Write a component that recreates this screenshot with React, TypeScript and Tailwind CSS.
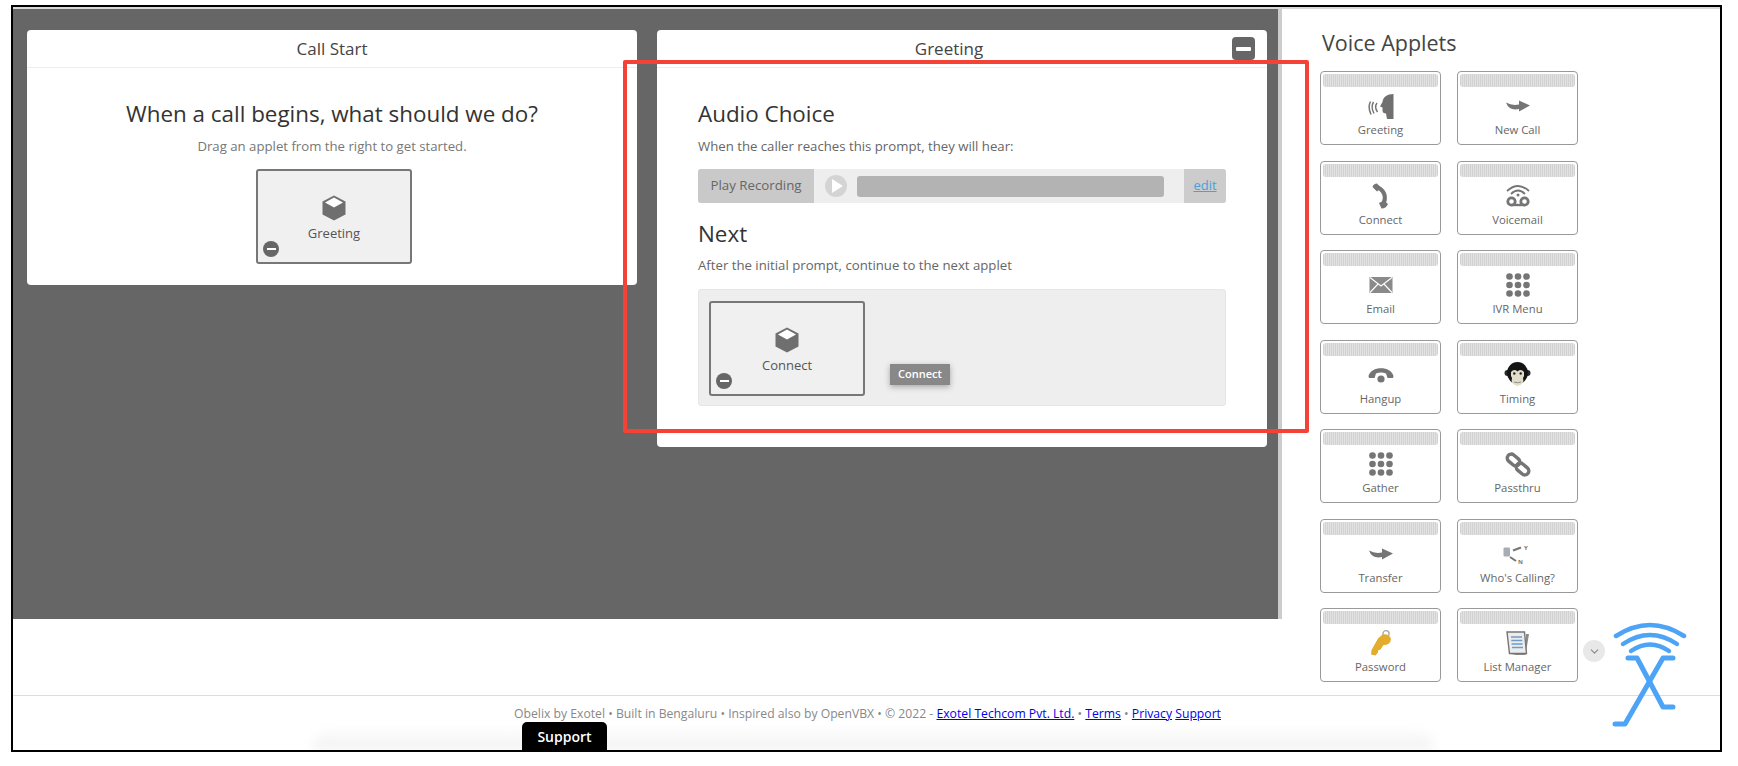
import React from 'react';
import { ChevronDown } from 'lucide-react';

const Keypad = () => (
  <svg width="24" height="25" viewBox="0 0 24 25" fill="#757575">
    {[3.5, 12, 20.5].map((y) =>
      [3.5, 12, 20.5].map((x) => <circle key={`${x}-${y}`} cx={x} cy={y} r="3.3" />)
    )}
  </svg>
);

const SwoopArrow = () => (
  <svg width="24" height="12" viewBox="0 0 24 12" fill="#757575">
    <path d="M0 2.5 Q6 6 13 4.5 L13 0.5 L24 5.5 L13 11.5 L13 9 Q3 11 0 2.5Z" />
  </svg>
);

const CubeIcon = () => (
  <svg width="26" height="26" viewBox="0 0 26 26">
    <path d="M13 0.5 L24.5 6.5 L24.5 19.5 L13 25.5 L1.5 19.5 L1.5 6.5Z" fill="#6f6f6f" />
    <path d="M13 2.5 L22 7.5 L13 12.5 L4 7.5Z" fill="#fff" />
  </svg>
);

const GreetingIcon = () => (
  <svg width="26" height="25" viewBox="0 0 26 25">
    <path d="M25.5 0 C19 0 15 3 14.5 8 L12 12.5 L14.5 13.5 L14.5 17 Q15 19.5 18 19.5 L19 25 L25.5 25Z" fill="#707070" />
    <g fill="none" stroke="#757575" strokeWidth="1.5">
      <path d="M9 9 Q6 13 9.5 18" />
      <path d="M5.5 8 Q2.5 13 6 19.5" />
      <path d="M2.5 7.5 Q-0.5 13 3 20.5" />
    </g>
  </svg>
);

const PhoneIcon = () => (
  <svg width="18" height="26" viewBox="0 0 18 26">
    <path d="M3 3.5 C12 6 16 14 10 23" fill="none" stroke="#757575" strokeWidth="4.2" />
    <path d="M0.5 4 Q1.5 0.5 5 0.5 L9 5 L5 8.5Z" fill="#757575" />
    <path d="M7 20 L12 17.5 L16 21 Q14 25.5 9.5 25.5Z" fill="#757575" />
  </svg>
);

const VoicemailIcon = () => (
  <svg width="26" height="23" viewBox="0 0 26 23" fill="none" stroke="#757575">
    <path d="M2 7 Q13 -3 24 7" strokeWidth="1.8" />
    <path d="M6 10 Q13 3 20 10" strokeWidth="1.8" />
    <circle cx="13" cy="11" r="1.5" fill="#757575" stroke="none" />
    <circle cx="6.5" cy="17.5" r="3.7" strokeWidth="2.8" />
    <circle cx="19.5" cy="17.5" r="3.7" strokeWidth="2.8" />
    <path d="M6.5 21 H19.5" strokeWidth="2.4" />
  </svg>
);

const MailIcon = () => (
  <svg width="24" height="18" viewBox="0 0 24 18">
    <rect x="0.5" y="1" width="23" height="16" fill="#8a8a8a" />
    <path d="M1 1.5 L12 10 L23 1.5 M1 16.5 L9 8 M23 16.5 L15 8" fill="none" stroke="#fff" strokeWidth="1.1" />
  </svg>
);

const HangupIcon = () => (
  <svg width="26" height="16" viewBox="0 0 26 16" fill="#757575">
    <path d="M0.5 9 C3 -1.5 23 -1.5 25.5 9 L25 11 L19.5 11 L18 6.5 C15 5 11 5 8 6.5 L6.5 11 L1 11Z" />
    <circle cx="13" cy="12" r="3.6" />
  </svg>
);

const MonkeyIcon = () => (
  <svg width="27" height="25" viewBox="0 0 27 25">
    <circle cx="3.5" cy="11" r="3" fill="#2a2a2a" />
    <circle cx="23.5" cy="11" r="3" fill="#2a2a2a" />
    <ellipse cx="13.5" cy="11" rx="10.5" ry="11" fill="#141414" />
    <path d="M7 10 Q10 6.5 13.5 9.5 Q17 6.5 20 10 Q20.5 14 19 16 Q21 22 13.5 24 Q6 22 8 16 Q6.5 14 7 10Z" fill="#e2dccb" />
    <circle cx="10.3" cy="11.5" r="1.2" fill="#222" />
    <circle cx="16.7" cy="11.5" r="1.2" fill="#222" />
    <path d="M10 20 Q13.5 21.5 17 20" fill="none" stroke="#777" strokeWidth="0.8" />
  </svg>
);

const LinkIcon = () => (
  <svg width="26" height="25" viewBox="0 0 26 25" fill="none" stroke="#757575" strokeWidth="3.4">
    <rect x="1.5" y="4" width="14" height="8" rx="4" transform="rotate(40 8.5 8)" />
    <rect x="10.5" y="13" width="14" height="8" rx="4" transform="rotate(40 17.5 17)" />
  </svg>
);

const WhosCallingIcon = () => (
  <svg width="29" height="24" viewBox="0 0 29 24">
    <rect x="0.5" y="5.5" width="6.5" height="9" rx="1" fill="#a7adb3" />
    <path d="M10 8.5 L18 5.5" stroke="#757575" strokeWidth="2" />
    <path d="M7 15 L13 19" stroke="#757575" strokeWidth="2" />
    <text x="21" y="8" fontSize="6" fontWeight="700" fill="#777">Y</text>
    <text x="15" y="22" fontSize="6" fontWeight="700" fill="#777">N</text>
  </svg>
);

const KeyIcon = () => (
  <svg width="22" height="26" viewBox="0 0 22 26">
    <circle cx="16" cy="3.8" r="3.1" fill="none" stroke="#a3a3a3" strokeWidth="1.3" />
    <path d="M8 8.5 L1.5 20 L1 24.5 L5.5 25.5 L8 22.5 L8 20.5 L10.5 19.5 L13.5 15 Q20.5 15 21 9 Q19 3.5 12.5 4.5Z" fill="#e4ac2c" />
  </svg>
);

const ListIcon = () => (
  <svg width="24" height="25" viewBox="0 0 24 25">
    <path d="M5 24 L19.5 24 L23 3 L20 3 L20 21Z" fill="#8a8a8a" />
    <path d="M1 1 L18.5 1 L20.5 22.5 L3.5 22.5Z" fill="#ececec" stroke="#757575" strokeWidth="1.4" />
    <path d="M5 6 H16 M5.3 9.5 H16.3 M5.6 13 H16.6 M6 16.5 H17" stroke="#6c9cc7" strokeWidth="1.5" />
  </svg>
);

const applets: { label: string; icon: React.ReactNode }[] = [
  { label: 'Greeting', icon: <GreetingIcon /> },
  { label: 'New Call', icon: <SwoopArrow /> },
  { label: 'Connect', icon: <PhoneIcon /> },
  { label: 'Voicemail', icon: <VoicemailIcon /> },
  { label: 'Email', icon: <MailIcon /> },
  { label: 'IVR Menu', icon: <Keypad /> },
  { label: 'Hangup', icon: <HangupIcon /> },
  { label: 'Timing', icon: <MonkeyIcon /> },
  { label: 'Gather', icon: <Keypad /> },
  { label: 'Passthru', icon: <LinkIcon /> },
  { label: 'Transfer', icon: <SwoopArrow /> },
  { label: "Who's Calling?", icon: <WhosCallingIcon /> },
  { label: 'Password', icon: <KeyIcon /> },
  { label: 'List Manager', icon: <ListIcon /> },
];

const AppletCard = ({ label, icon }: { label: string; icon: React.ReactNode }) => (
  <div className="h-[74px] rounded-[4px] border border-[#999] flex flex-col px-[2px] pt-[2px] bg-white">
    <div className="h-[13px] rounded-[3px] bg-[#e2e2e2] bg-[linear-gradient(90deg,#d2d2d2_1px,transparent_1px)] bg-[length:2px_2px]" />
    <div className="h-[32px] mt-[3px] flex items-center justify-center">{icon}</div>
    <div className="text-[11.3px] leading-[16px] text-[#666] text-center">{label}</div>
  </div>
);

const MinusDot = () => (
  <div className="absolute left-[5px] bottom-[5px] w-[16px] h-[16px] rounded-full bg-[#666] flex items-center justify-center">
    <div className="w-[9px] h-[2.5px] bg-white" />
  </div>
);

const DroppedItem = ({ label }: { label: string }) => (
  <div className="relative w-[156px] h-[95px] rounded-[3px] border-2 border-[#777] bg-[#f0f0f0] flex flex-col items-center pt-[24px]">
    <CubeIcon />
    <div className="text-[13px] leading-[18px] text-[#555] mt-[3px]">{label}</div>
    <MinusDot />
  </div>
);

const FlowCard = ({ title, action, children }: { title: string; action?: boolean; children: React.ReactNode }) => (
  <div className="relative w-[610px] bg-white rounded-[4px] self-start">
    <div className={action ? 'h-[38px] border-b border-[#eee] flex items-center justify-center text-[17px] text-[#444] pr-[26px]' : 'h-[38px] border-b border-[#eee] flex items-center justify-center text-[17px] text-[#444]'}>{title}</div>
    {children}
  </div>
);

export default function App() {
  return (
    <div className="relative w-[1738px] h-[766px] bg-white overflow-hidden pt-[5px] pl-[11px] font-['Open_Sans',sans-serif]">
      <div className="w-[1711px] h-[747px] border-2 border-black flex flex-col">
        <div className="flex h-[688px] border-t-2 border-[#d8d8d8]">
          <div className="w-[1269px] h-[610px] bg-[#666] border-r-4 border-[#ccc] flex gap-[20px] pl-[14px] pt-[21px]">
            <FlowCard title="Call Start">
              <div className="flex flex-col items-center pt-[31px] h-[217px]">
                <div className="text-[22.4px] leading-[30px] text-[#333]">When a call begins, what should we do?</div>
                <div className="text-[13.2px] leading-[18px] text-[#777] mt-[8px] mb-[14px]">Drag an applet from the right to get started.</div>
                <div className="ml-[4px]">
                  <DroppedItem label="Greeting" />
                </div>
              </div>
            </FlowCard>
            <FlowCard title="Greeting" action>
              <div className="absolute right-[12px] top-[7px] w-[23px] h-[23px] rounded-[4px] bg-[#666] flex items-center justify-center">
                <div className="w-[15px] h-[4px] bg-white rounded-[1px]" />
              </div>
              <div className="px-[41px] pt-[31px] h-[379px] flex flex-col">
                <div className="text-[22.4px] leading-[30px] text-[#333]">Audio Choice</div>
                <div className="text-[13.2px] leading-[18px] text-[#666] mt-[8px]">When the caller reaches this prompt, they will hear:</div>
                <div className="mt-[14px] h-[34px] rounded-[3px] bg-[#eee] flex items-stretch overflow-hidden">
                  <div className="w-[116px] bg-[#c9c9c9] text-[13.3px] text-[#666] flex items-center justify-center">Play Recording</div>
                  <div className="flex-1 flex items-center pl-[11px] pr-[20px] gap-[10px]">
                    <div className="w-[22px] h-[22px] rounded-full bg-[#d4d4d4] flex items-center justify-center shrink-0">
                      <div className="w-0 h-0 ml-[2px] border-y-[7px] border-y-transparent border-l-[11px] border-l-white" />
                    </div>
                    <div className="flex-1 h-[21px] rounded-[3px] bg-[#b3b3b3]" />
                  </div>
                  <div className="w-[42px] bg-[#ccc] text-[13px] text-[#4a9fdc] underline flex items-center justify-center">edit</div>
                </div>
                <div className="text-[22.4px] leading-[30px] text-[#333] mt-[16px]">Next</div>
                <div className="text-[13.2px] leading-[18px] text-[#666] mt-[7px]">After the initial prompt, continue to the next applet</div>
                <div className="relative mt-[15px] h-[117px] rounded-[3px] bg-[#eee] border border-[#e6e6e6] px-[10px] pt-[11px]">
                  <DroppedItem label="Connect" />
                  <div className="absolute left-[191px] top-[74px] h-[21px] w-[60px] bg-[#888] text-white text-[11px] font-semibold flex items-center justify-center shadow-[0_2px_6px_rgba(0,0,0,0.3)]">Connect</div>
                </div>
              </div>
            </FlowCard>
          </div>

          <div className="pl-[38px] pt-[19px]">
            <div className="text-[21.5px] leading-[30px] text-[#444] pl-[2px]">Voice Applets</div>
            <div className="mt-[13px] grid grid-cols-[121px_121px] gap-x-[16px] gap-y-[15.5px]">
              {applets.map((a) => (
                <AppletCard key={a.label} label={a.label} icon={a.icon} />
              ))}
            </div>
          </div>
        </div>

        <div className="relative flex-1 border-t border-[#ddd] flex flex-col overflow-hidden">
          <div className="absolute left-[300px] bottom-0 w-[1120px] h-[22px] rounded-t-[20px] bg-gradient-to-t from-[#efefef] to-transparent blur-[6px]" />
          <div className="relative pt-[9px] text-[12.2px] leading-[18px] text-[#888] text-center pl-[2px] whitespace-nowrap">
            Obelix by Exotel • Built in Bengaluru • Inspired also by OpenVBX • © 2022 - <a className="text-[#0000ee] underline">Exotel Techcom Pvt. Ltd.</a> • <a className="text-[#0000ee] underline">Terms</a> • <a className="text-[#0000ee] underline">Privacy</a> <a className="text-[#0000ee] underline">Support</a>
          </div>
          <div className="relative ml-[509px] w-[85px] h-[29px] -mt-[1px] bg-black text-white text-[14px] font-semibold rounded-t-[5px] flex items-center justify-center">Support</div>
        </div>
      </div>

      {/* red annotation box drawn over the screenshot */}
      <div className="absolute left-[623px] top-[60px] w-[686px] h-[373px] border-4 border-[#f44336] rounded-[2px] pointer-events-none" />

      <div className="absolute left-[1583px] top-[640px] w-[22px] h-[22px] rounded-full bg-[#e8e8e8] flex items-center justify-center">
        <ChevronDown size={13} color="#888" />
      </div>

      <svg className="absolute left-[1610px] top-[618px]" width="80" height="112" viewBox="0 0 80 112" fill="none" stroke="#4da3f5" strokeLinecap="round">
        <path d="M6 18 Q40 -4 74 18" strokeWidth="4.5" />
        <path d="M13 26 Q40 8 67 26" strokeWidth="4.5" />
        <path d="M21 33 Q40 20 59 33" strokeWidth="4.5" />
        <path d="M18 40 H27 L53 89 H63" strokeWidth="5" strokeLinejoin="round" />
        <path d="M63 40 H53 L15 106 H5" strokeWidth="5" strokeLinejoin="round" />
      </svg>
    </div>
  );
}
